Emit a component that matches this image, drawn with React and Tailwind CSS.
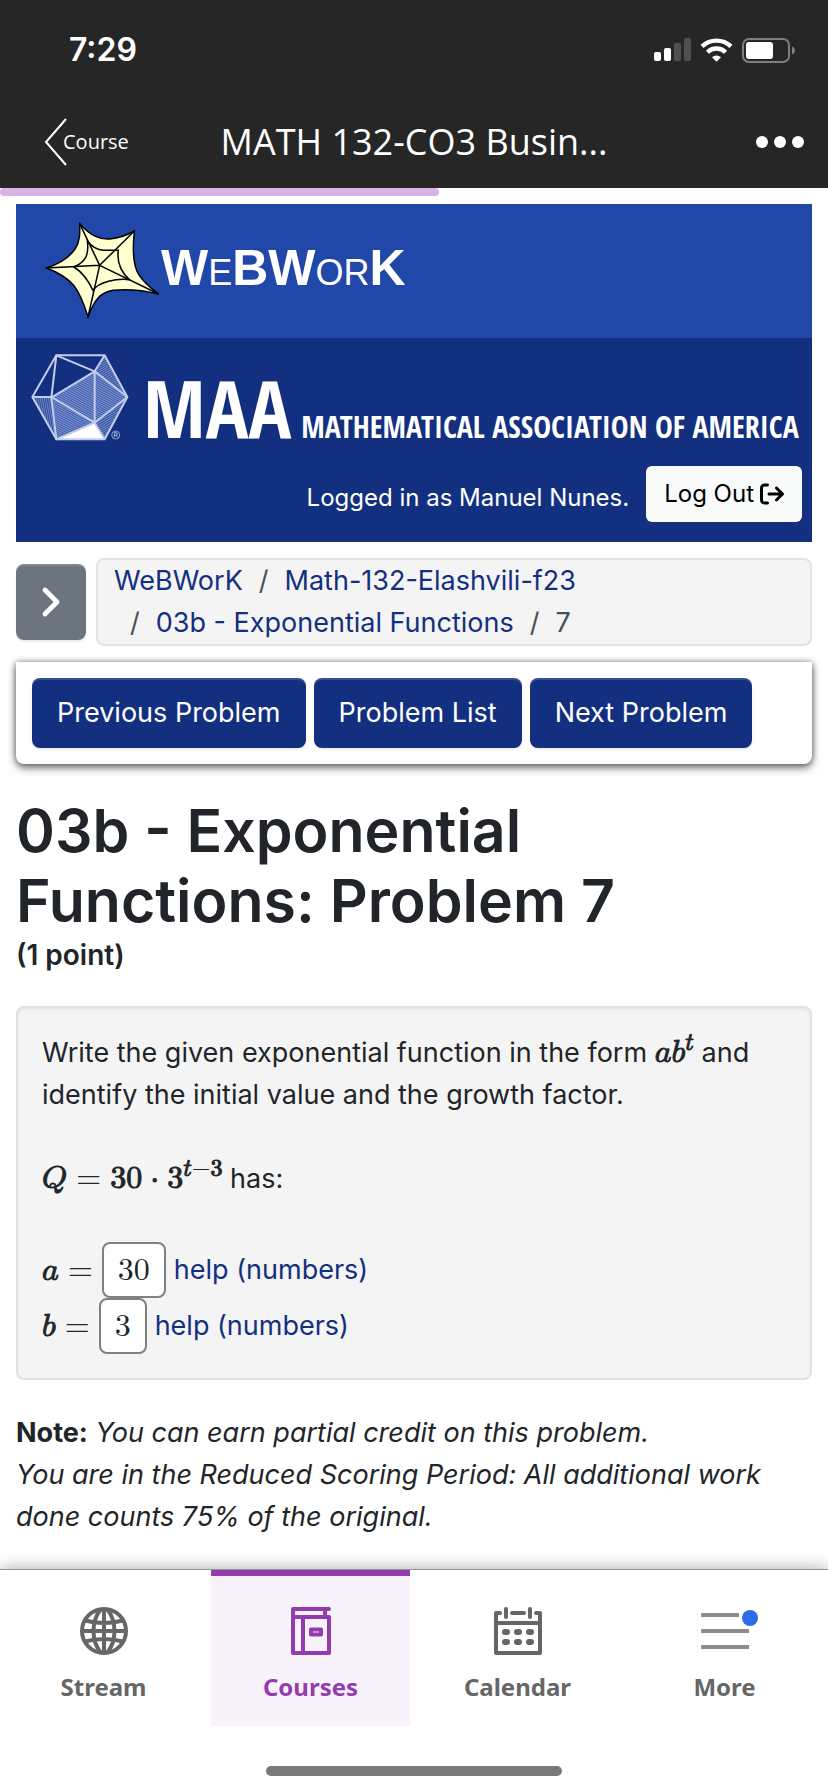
import { useState } from 'react'
import { ChevronRight } from 'lucide-react'
import { FaArrowRightFromBracket } from 'react-icons/fa6'

function StatusBar() {
  return (
    <div className="flex items-center justify-between h-[100px] pl-[69px] pr-8">
      <span className="font-semibold text-[32px] leading-10">7:29</span>
      <div className="flex items-center">
        <svg width="37" height="24" viewBox="0 0 37 24" aria-hidden="true">
          <rect x="0" y="14" width="7" height="9" rx="2" fill="#fff" />
          <rect x="10" y="10" width="7" height="13" rx="2" fill="#fff" />
          <rect x="20" y="5" width="7" height="18" rx="2" fill="#505050" />
          <rect x="30" y="0" width="7" height="23" rx="2" fill="#505050" />
        </svg>
        <svg className="ml-[9px]" width="33" height="24" viewBox="0 0 33 24" aria-hidden="true">
          <g fill="none" stroke="#fff" strokeWidth="4.4">
            <path d="M2 8.4a21 21 0 0 1 29 0" />
            <path d="M7.4 14.2a13 13 0 0 1 18.2 0" />
          </g>
          <path fill="#fff" d="M12 19.2a6.6 6.6 0 0 1 9 0l-4.5 4.6z" />
        </svg>
        <svg className="ml-[9px]" width="54" height="25" viewBox="0 0 54 25" aria-hidden="true">
          <rect x="1" y="1" width="46" height="23" rx="6" fill="none" stroke="#7f7f7f" strokeWidth="2" />
          <rect x="4" y="4" width="27" height="17" rx="3" fill="#fff" />
          <path d="M50 8.5c4 1.2 4 6.8 0 8z" fill="#7f7f7f" />
        </svg>
      </div>
    </div>
  )
}

function NavBar() {
  return (
    <div className="grid grid-cols-[1fr_auto_1fr] items-center h-[88px] px-6 pb-1 font-['Open_Sans','Noto_Sans',sans-serif]">
      <button className="justify-self-start flex items-center pl-5 text-xl">
        <svg width="23" height="48" viewBox="0 0 23 48" fill="none" stroke="#fff" strokeWidth="2" aria-hidden="true">
          <path d="M22 1 2 24l20 23" />
        </svg>
        <span className="-ml-1">Course</span>
      </button>
      <h1 className="text-4xl">MATH 132-CO3 Busin...</h1>
      <button aria-label="More options" className="justify-self-end flex gap-1.5">
        <span className="size-3 rounded-full bg-white" />
        <span className="size-3 rounded-full bg-white" />
        <span className="size-3 rounded-full bg-white" />
      </button>
    </div>
  )
}

function WebLogo() {
  return (
    <svg width="116" height="97" viewBox="135 65 348 291" aria-hidden="true">
      <path
        d="M239 70C272 106 298 118 330 116C358 113 380 105 403 92C396 160 402 200 416 222C430 245 450 262 476 281C430 270 380 266 340 270C300 276 282 300 264 350C252 310 240 280 222 256C205 236 180 218 139 203C180 190 208 172 226 145C240 122 240 100 239 70Z"
        fill="#ffffd0" stroke="#000" strokeWidth="4.5" strokeLinejoin="miter"
      />
      <g fill="none" stroke="#000" strokeWidth="4.5">
        <path d="M299 195 239 70M299 195 403 92M299 195 476 281M299 195 264 350M299 195 139 203" />
        <path d="M262 122C278 142 292 149 310 150L355 150C350 185 360 212 388 238C350 234 296 244 279 270C265 240 250 218 222 200C255 186 268 165 262 122Z" />
      </g>
    </svg>
  )
}

function MaaLogo() {
  return (
    <svg width="98" height="88" viewBox="94 458 294 264" aria-hidden="true">
      <defs>
        <pattern id="hatchA" width="6" height="6" patternUnits="userSpaceOnUse" patternTransform="rotate(28)">
          <rect width="6" height="6" fill="#3f5cae" /><rect width="6" height="2.5" fill="#8b9ed3" />
        </pattern>
        <pattern id="hatchB" width="6" height="6" patternUnits="userSpaceOnUse" patternTransform="rotate(-30)">
          <rect width="6" height="6" fill="#2b4a9f" /><rect width="6" height="2.5" fill="#8b9ed3" />
        </pattern>
        <pattern id="hatchC" width="6" height="6" patternUnits="userSpaceOnUse" patternTransform="rotate(80)">
          <rect width="6" height="6" fill="#2b4a9f" /><rect width="6" height="2.5" fill="#7d92cc" />
        </pattern>
      </defs>
      <path d="M155 592 285 513V667Z" fill="url(#hatchA)" />
      <path d="M285 513 383 590 285 667Z" fill="url(#hatchA)" />
      <path d="M315 465 383 590 285 513Z" fill="url(#hatchB)" />
      <path d="M383 590 315 717 285 667Z" fill="url(#hatchB)" />
      <path d="M155 592 285 667 170 717Z" fill="url(#hatchA)" />
      <path d="M98 590H155L170 717Z" fill="url(#hatchC)" />
      <path d="M170 717 285 667 315 717Z" fill="#fff" />
      <g fill="none" stroke="#c3cdea" strokeWidth="6" strokeLinejoin="round">
        <path d="M170 465H315L383 590 315 717H170L98 590Z" />
        <path d="M170 465 155 592 285 513ZM315 465 285 513 383 590 285 667 315 717M98 590H155L285 667 170 717 155 592M285 513V667" />
      </g>
      <circle cx="348" cy="704" r="12" fill="none" stroke="#8b9ed3" strokeWidth="3" />
      <path d="M344 711V697h5a4 4 0 0 1 0 8h-5m5 0 4 6" fill="none" stroke="#c3cdea" strokeWidth="2.5" />
    </svg>
  )
}

function Masthead() {
  return (
    <header className="text-white">
      <div className="flex items-start h-[134px] pt-[18px] pl-[29px] bg-[#2148a8]">
        <WebLogo />
        <p className="pt-4 font-['Liberation_Sans',Arial,sans-serif] text-[50px] leading-[60px] font-bold">
          W<span className="text-4xl font-normal">E</span>BW<span className="text-4xl font-normal">OR</span>K
        </p>
      </div>
      <div className="bg-[#133080] pt-[15px] pb-5">
        <div className="flex items-end pl-[15px] font-['Open_Sans_Condensed','Roboto_Condensed',sans-serif] font-bold whitespace-nowrap">
          <MaaLogo />
          <div className="flex items-baseline gap-2.5 h-[88px] ml-3.5">
            <span className="text-[80px] leading-[108px]">MAA</span>
            <span className="text-[30px]">MATHEMATICAL ASSOCIATION OF AMERICA</span>
          </div>
        </div>
        <div className="flex items-center justify-end gap-[17px] mt-[25px] pr-2.5 text-2xl">
          <span className="pt-2">Logged in as Manuel Nunes.</span>
          <button className="flex items-center gap-1.5 h-14 px-[18px] rounded-md bg-[#f8faf9] text-black">
            Log Out <FaArrowRightFromBracket />
          </button>
        </div>
      </div>
    </header>
  )
}

const crumbs = ['WeBWorK', 'Math-132-Elashvili-f23', '03b - Exponential Functions']

function Breadcrumbs() {
  return (
    <div className="flex items-center gap-2.5 mt-4">
      <button
        aria-label="Open menu"
        className="flex shrink-0 items-center justify-center w-[70px] h-[76px] rounded-lg bg-[#6c757d] text-white shadow-[inset_0_2px_0_#ffffff26,0_2px_2px_#00000013]"
      >
        <ChevronRight className="size-12" strokeWidth={2.4} />
      </button>
      <nav aria-label="Breadcrumb" className="flex-1 rounded-lg border-2 border-[#e3e3e3] bg-[#f4f4f4] px-4">
        <ol className="flex flex-wrap">
          {crumbs.map((c, i) => (
            <li key={c} className={i > 0 ? 'flex pl-4' : 'flex'}>
              {i > 0 && <span className="pr-4 text-[#495057]">/</span>}
              <a href="#" className="text-[#133080]">{c}</a>
            </li>
          ))}
          <li className="flex pl-4 text-[#495057]"><span className="pr-4">/</span>7</li>
        </ol>
      </nav>
    </div>
  )
}

function ProblemNav() {
  return (
    <div className="flex gap-2 mt-4 p-4 rounded-b-lg bg-white shadow-[0_4px_8px_#00000080,0_0_6px_#00000066]">
      {['Previous Problem', 'Problem List', 'Next Problem'].map(label => (
        <a
          key={label}
          href="#"
          className="h-[70px] px-[25px] leading-[70px] rounded-lg bg-[#133080] text-white shadow-[inset_0_2px_0_#ffffff26,0_2px_2px_#00000013]"
        >
          {label}
        </a>
      ))}
    </div>
  )
}

function MathText({ children }) {
  return (
    <span className="font-['Latin_Modern_Math','Liberation_Serif',serif] text-[32px] leading-none [-webkit-text-stroke:1px]">
      {children}
    </span>
  )
}

// operators stay thin, only the letters and digits get the heavier stroke
function Equals() {
  return <span className="mx-[9px] [-webkit-text-stroke:0px]">=</span>
}

function Answer({ id, symbol, value, width }) {
  return (
    <div className="flex items-center h-14">
      <label htmlFor={id} className="flex"><MathText>{symbol}<Equals /></MathText></label>
      <input
        id={id}
        defaultValue={value}
        className={`${width} h-14 rounded-lg border-2 border-[#808080] bg-white text-center font-['Latin_Modern_Math','Liberation_Serif',serif] text-[32px]`}
      />
      <a href="#" className="ml-2 text-[#133080]">help (numbers)</a>
    </div>
  )
}

function Problem() {
  return (
    <section className="mt-8 px-6 py-6 rounded-lg border-2 border-[#e1e1e1] bg-[#f4f4f4] shadow-[inset_0_2px_2px_#0000000d]">
      <p>
        Write the given exponential function in the form{' '}
        <MathText>𝑎𝑏<sup className="text-2xl leading-none">𝑡</sup></MathText> and identify the initial value and the growth factor.
      </p>
      <p className="h-[42px] my-[42px]">
        <MathText>
          𝑄<Equals />30<span className="mx-2">·</span>3
          <sup className="text-2xl leading-none">𝑡<span className="[-webkit-text-stroke:0px]">−</span>3</sup>
        </MathText>{' '}
        has:
      </p>
      <Answer id="AnSwEr0001" symbol="𝑎" value="30" width="w-16" />
      <Answer id="AnSwEr0002" symbol="𝑏" value="3" width="w-12" />
    </section>
  )
}

function GlobeIcon() {
  return (
    <svg width="48" height="48" viewBox="0 0 48 48" fill="none" stroke="currentColor" strokeWidth="4" aria-hidden="true">
      <circle cx="24" cy="24" r="22" />
      <path d="M24 2v44M2 24h44M5 13.5q19 5 38 0M5 34.5q19-5 38 0" />
      <path d="M21 2C11 14 11 34 21 46M27 2C37 14 37 34 27 46" />
    </svg>
  )
}

function CoursesIcon() {
  return (
    <svg width="40" height="48" viewBox="0 0 40 48" fill="none" stroke="currentColor" strokeWidth="4" strokeLinejoin="round" strokeLinecap="round" aria-hidden="true">
      <path d="M38 2H2v44h36V10H2M34 2v8" />
      <path d="M12 10v36" />
      <path d="M20 22.5h10v5H20z" />
    </svg>
  )
}

function CalendarIcon() {
  return (
    <svg width="48" height="48" viewBox="0 0 48 48" fill="none" stroke="currentColor" strokeWidth="4" strokeLinejoin="round" strokeLinecap="round" aria-hidden="true">
      <path d="M6 6H2v40h44V6h-4M18 6h12M12 2v8M36 2v8M2 16h44" />
      <path strokeWidth="6" d="M11 25h2M23 25h2M35 25h2M11 35h2M23 35h2M35 35h2" />
    </svg>
  )
}

function MoreIcon() {
  return (
    <span className="relative">
      <svg width="48" height="48" viewBox="0 0 48 48" stroke="#8c8c8c" strokeWidth="4" aria-hidden="true">
        <path d="M0 8h38M0 24h48M0 40h48" />
      </svg>
      <span className="absolute left-[41px] top-[3px] size-4 rounded-full bg-[#2d6be8]" />
    </span>
  )
}

const tabs = [
  { name: 'Stream', icon: GlobeIcon },
  { name: 'Courses', icon: CoursesIcon },
  { name: 'Calendar', icon: CalendarIcon },
  { name: 'More', icon: MoreIcon },
]

function TabBar() {
  const [active, setActive] = useState('Courses')

  return (
    <footer className="border-t border-[#949494] bg-white shadow-[0_0_16px_#00000059]">
      <nav className="grid grid-cols-4 gap-2 px-1 font-['Noto_Sans',sans-serif] font-bold text-2xl">
        {tabs.map(({ name, icon: Icon }) => (
          <button
            key={name}
            onClick={() => setActive(name)}
            className={`flex flex-col items-center h-[156px] pt-[31px] border-t-[6px]
              ${active === name ? 'border-[#943bb0] bg-[#f8f3fb] text-[#943bb0]' : 'border-transparent text-[#666]'}`}
          >
            <Icon />
            <span className="mt-4 leading-8">{name}</span>
          </button>
        ))}
      </nav>
      <div className="flex justify-center h-[66px] pt-10">
        <span className="w-[296px] h-2.5 rounded-full bg-[#7a7a7a]" />
      </div>
    </footer>
  )
}

export default function App() {
  return (
    <div className="flex flex-col min-h-screen overflow-x-hidden bg-white text-[#212529] font-['Inter',sans-serif]">
      <div className="bg-[#262626] text-white">
        <StatusBar />
        <NavBar />
      </div>
      <div className="h-2">
        <div className="w-[53%] h-2 rounded-full bg-[#d9b3e6]" />
      </div>
      <main className="flex-1 px-4 pt-2 text-[27px] leading-[42px]">
        <Masthead />
        <Breadcrumbs />
        <ProblemNav />
        <h2 className="mt-8 text-[59px] leading-[70px] font-semibold">03b - Exponential Functions: Problem 7</h2>
        <p className="text-[28px] leading-[38px] font-semibold">(1 point)</p>
        <Problem />
        <p className="mt-8">
          <b>Note:</b> <i>You can earn partial credit on this problem.</i>
          <br />
          <i>You are in the Reduced Scoring Period: All additional work done counts 75% of the original.</i>
        </p>
      </main>
      <TabBar />
    </div>
  )
}
